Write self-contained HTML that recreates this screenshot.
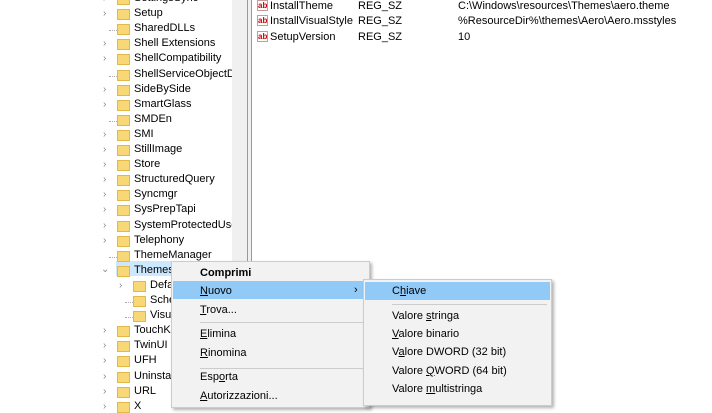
<html><head><style>
body{margin:0;width:712px;height:400px;overflow:hidden;background:#fff;font-family:"Liberation Sans",sans-serif;font-size:11px;color:#000;position:relative}
.a{position:absolute;white-space:nowrap}
.f{position:absolute;width:13px;height:11px;background:#f8d776;border:1px solid #e2b84a;box-sizing:border-box;left:117px}
.c{position:absolute;left:102px;color:#888;font-size:10px}
.d{position:absolute;border-top:1px dotted #aaa;width:8px;left:109px}
.m{position:absolute;background:#f2f2f2;border:1px solid #ccc;box-shadow:2px 2px 3px rgba(0,0,0,.3)}
.i{position:absolute;left:28px}
.ab{position:absolute;left:257px;width:11px;height:11px;border:1px solid #c99;background:#fff;color:#c00;font-size:8px;font-weight:bold;line-height:10px;box-sizing:border-box;text-align:center}
u{text-decoration:underline}
</style></head><body>
<div class="a" style="left:232px;top:0;width:15px;height:400px;background:#f0f0f0"></div>
<div class="a" style="left:247px;top:0;width:1px;height:400px;background:#999"></div>
<div class="a" style="left:248px;top:0;width:3px;height:400px;background:#f0f0f0"></div>
<div class="a" style="left:251px;top:0;width:1px;height:400px;background:#999"></div>
<div class="a" style="left:116px;top:261px;width:56px;height:15px;background:#cce8ff"></div>
<div id="tree"></div>
<div class="ab" style="top:0">ab</div><div class="a" style="left:270px;top:0">InstallTheme</div><div class="a" style="left:358px;top:0">REG_SZ</div><div class="a" style="left:458px;top:0">C:\Windows\resources\Themes\aero.theme</div>
<div class="ab" style="top:15px">ab</div><div class="a" style="left:270px;top:15px">InstallVisualStyle</div><div class="a" style="left:358px;top:15px">REG_SZ</div><div class="a" style="left:458px;top:15px">%ResourceDir%\themes\Aero\Aero.msstyles</div>
<div class="ab" style="top:31px">ab</div><div class="a" style="left:270px;top:31px">SetupVersion</div><div class="a" style="left:358px;top:31px">REG_SZ</div><div class="a" style="left:458px;top:31px">10</div>
<div class="m" style="left:171px;top:261px;width:197px;height:145px">
<div class="a" style="left:1px;top:19px;width:195px;height:18px;background:#91c9f7"></div>
<div class="i a" style="top:5px;font-weight:bold">Comprimi</div>
<div class="i a" style="top:23px"><u>N</u>uovo</div><div class="a" style="left:182px;top:22px">›</div>
<div class="i a" style="top:42px"><u>T</u>rova...</div>
<div class="a" style="left:28px;top:60px;width:165px;height:1px;background:#ccc"></div>
<div class="i a" style="top:66px"><u>E</u>limina</div>
<div class="i a" style="top:85px"><u>R</u>inomina</div>
<div class="a" style="left:28px;top:106px;width:165px;height:1px;background:#ccc"></div>
<div class="i a" style="top:109px">Esp<u>o</u>rta</div>
<div class="i a" style="top:128px"><u>A</u>utorizzazioni...</div>
</div>
<div class="m" style="left:363px;top:279px;width:187px;height:125px">
<div class="a" style="left:1px;top:2px;width:185px;height:18px;background:#91c9f7"></div>
<div class="i a" style="top:5px">C<u>h</u>iave</div>
<div class="a" style="left:28px;top:24px;width:155px;height:1px;background:#ccc"></div>
<div class="i a" style="top:30px">Valore <u>s</u>tringa</div>
<div class="i a" style="top:48px"><u>V</u>alore binario</div>
<div class="i a" style="top:66px">V<u>a</u>lore DWORD (32 bit)</div>
<div class="i a" style="top:85px">Valore <u>Q</u>WORD (64 bit)</div>
<div class="i a" style="top:103px">Valore <u>m</u>ultistringa</div>
</div>
<script>
var n=[["SettingsSync",1],["Setup",1],["SharedDLLs",0],["Shell Extensions",1],["ShellCompatibility",1],["ShellServiceObjectDelayLoad",0],["SideBySide",1],["SmartGlass",1],["SMDEn",0],["SMI",1],["StillImage",1],["Store",1],["StructuredQuery",1],["Syncmgr",1],["SysPrepTapi",1],["SystemProtectedUserData",1],["Telephony",1],["ThemeManager",0],["Themes",2],["Default",1,1],["Schemes",0,1],["VisualStyles",0,1],["TouchKeyboard",1],["TwinUI",1],["UFH",1],["Uninstall",1],["URL",1],["X",1]];
var h="";n.forEach(function(r,k){var y=-8+k*15.1,o=r[2]?16:0;
h+='<div class="f" style="left:'+(117+o)+'px;top:'+(y+2)+'px"></div>';
if(r[1]==1)h+='<div class="c" style="left:'+(103+o)+'px;top:'+(y+1)+'px">›</div>';
else if(r[1]==2)h+='<div class="c" style="left:101px;top:'+y+'px">⌄</div>';
else h+='<div class="d" style="left:'+(109+o)+'px;top:'+(y+8)+'px"></div>';
h+='<div class="a" style="left:'+(134+o)+'px;top:'+y+'px;width:'+(98-o)+'px;overflow:hidden">'+r[0]+'</div>';});
document.getElementById("tree").innerHTML=h;
</script>
</body></html>
